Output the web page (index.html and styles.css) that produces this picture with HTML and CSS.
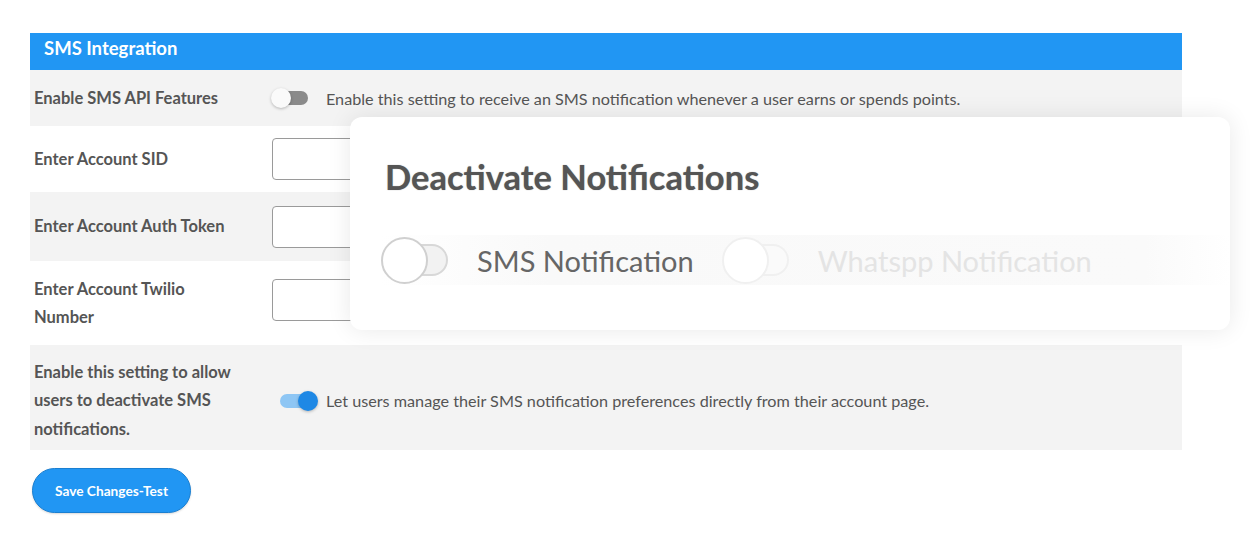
FILE: index.html
```html
<!DOCTYPE html>
<html lang="en">
<head>
<meta charset="utf-8">
<title>SMS Integration</title>
<link rel="stylesheet" href="styles.css">
</head>
<body>
<div class="page">
  <section class="panel">
    <h2 class="panel-title">SMS Integration</h2>
    <div class="row row-gray row-1">
      <div class="label">Enable SMS API Features</div>
      <div class="control">
        <span class="toggle toggle-off"><span class="track"></span><span class="knob"></span></span>
        <span class="desc">Enable this setting to receive an SMS notification whenever a user earns or spends points.</span>
      </div>
    </div>
    <div class="row row-2">
      <div class="label">Enter Account SID</div>
      <div class="control"><input class="field" type="text"></div>
    </div>
    <div class="row row-gray row-3">
      <div class="label">Enter Account Auth Token</div>
      <div class="control"><input class="field" type="text"></div>
    </div>
    <div class="row row-4">
      <div class="label label-wrap">Enter Account Twilio Number</div>
      <div class="control"><input class="field" type="text"></div>
    </div>
    <div class="row row-gray row-5">
      <div class="label label-wrap">Enable this setting to allow users to deactivate SMS notifications.</div>
      <div class="control control-5">
        <span class="toggle toggle-on"><span class="track"></span><span class="knob"></span></span>
        <span class="desc">Let users manage their SMS notification preferences directly from their account page.</span>
      </div>
    </div>
  </section>
  <button class="save" type="button">Save Changes-Test</button>

  <div class="card">
    <h3 class="card-title">Deactivate Notifications</h3>
    <div class="card-row">
      <div class="opt">
        <span class="big-toggle"><span class="big-track"></span><span class="big-knob"></span></span>
        <span class="opt-label">SMS Notification</span>
      </div>
      <div class="opt opt-faint">
        <span class="big-toggle"><span class="big-track"></span><span class="big-knob"></span></span>
        <span class="opt-label">Whatspp Notification</span>
      </div>
    </div>
  </div>
</div>
</body>
</html>
```

FILE: styles.css
```css
* { box-sizing: border-box; }
html, body { margin: 0; padding: 0; background: #fff; }
body { font-family: Lato, "Open Sans", Arial, sans-serif; color: #555; }

.page {
  position: relative;
  width: 1260px;
  height: 552px;
  padding: 33px 0 0 30px;
}

.panel { width: 1152px; }

.panel-title {
  margin: 0;
  height: 37px;
  background: #2196f3;
  color: #fff;
  font-size: 18.5px;
  font-weight: 700;
  line-height: 30px;
  padding-left: 14px;
}

.row {
  display: flex;
  align-items: center;
}
.row-gray { background: #f3f3f3; }
.row-1 { height: 56px; }
.row-2 { height: 66px; padding-top: 1px; }
.row-3 { height: 69px; }
.row-4 { height: 84px; }
.row-5 { height: 105px; padding-top: 6px; }

.label {
  width: 241px;
  padding-left: 4px;
  font-size: 16.5px;
  font-weight: 700;
  color: #555;
  line-height: 28.5px;
}
.label-wrap { width: 224px; margin-right: 17px; }
.row-4 .label { width: 190px; margin-right: 51px; }

.control {
  display: flex;
  align-items: center;
  flex: 1;
}
.row-2 .control { margin-top: -2px; }
.control-5 { padding-left: 9px; }

.desc {
  font-size: 16.2px;
  color: #555;
  margin-left: 18px;
}
.control-5 .desc { margin-left: 8px; }

.toggle {
  position: relative;
  width: 37px;
  height: 22px;
  display: inline-block;
}
.track {
  position: absolute;
  left: 2px;
  top: 4px;
  width: 35px;
  height: 14px;
  border-radius: 7px;
}
.knob {
  position: absolute;
  top: 1px;
  width: 20px;
  height: 20px;
  border-radius: 50%;
}
.toggle-off .track { background: #8a8a8a; }
.toggle-off .knob { left: 0; background: #fafafa; box-shadow: 0 1px 3px rgba(0,0,0,0.25); }
.toggle-on { width: 38px; }
.toggle-on .track { left: 0; width: 33px; background: #8ec6f4; }
.toggle-on .knob { left: 18px; background: #1e88e5; box-shadow: 0 1px 3px rgba(0,0,0,0.25); }

.field {
  width: 110px;
  height: 42px;
  border: 1px solid #9a9a9a;
  border-radius: 4px;
  background: #fff;
  margin-left: 1px;
}
.row-4 .field { margin-top: -7px; }

.save {
  margin-top: 18px;
  margin-left: 2px;
  width: 159px;
  height: 45px;
  border: 1px solid #1a7fd1;
  border-radius: 23px;
  background: #2196f3;
  color: #fff;
  font-family: Lato, Arial, sans-serif;
  font-size: 13.7px;
  font-weight: 700;
  box-shadow: 0 1px 2px rgba(0,0,0,0.15);
}

.card {
  position: absolute;
  left: 350px;
  top: 117px;
  width: 880px;
  height: 213px;
  background: #fff;
  border-radius: 12px;
  box-shadow: 0 0 24px rgba(0,0,0,0.09);
  padding: 38px 0 0 35px;
}
.card-title {
  margin: 0;
  font-size: 34.5px;
  font-weight: 700;
  color: #555;
  line-height: 44px;
  text-shadow: 0 0 1px rgba(80,80,80,0.6);
}
.card-row {
  margin-top: 36px;
  margin-left: -4px;
  display: flex;
  align-items: center;
  height: 50px;
  background: linear-gradient(90deg, #fff 0%, #f9f9f9 20%, #fafafa 90%, #fff 100%);
}
.opt { display: flex; align-items: center; }
.big-toggle {
  position: relative;
  width: 67px;
  height: 48px;
  display: inline-block;
}
.big-track {
  position: absolute;
  left: 20px;
  top: 8px;
  width: 47px;
  height: 32px;
  border-radius: 16px;
  background: #f2f2f2;
  border: 2px solid #d8d8d8;
}
.big-knob {
  position: absolute;
  left: 0;
  top: 1px;
  width: 47px;
  height: 47px;
  border-radius: 50%;
  background: #fff;
  border: 2px solid #d0d0d0;
}
.opt-label {
  margin-left: 29px;
  font-size: 29px;
  color: #666;
}
.opt-faint { margin-left: 28px; }
.opt-faint .big-track { background: #fafafa; border-color: #f0f0f0; }
.opt-faint .big-knob { border-color: #f0f0f0; }
.opt-faint .opt-label { color: #e4e4e4; }
```
